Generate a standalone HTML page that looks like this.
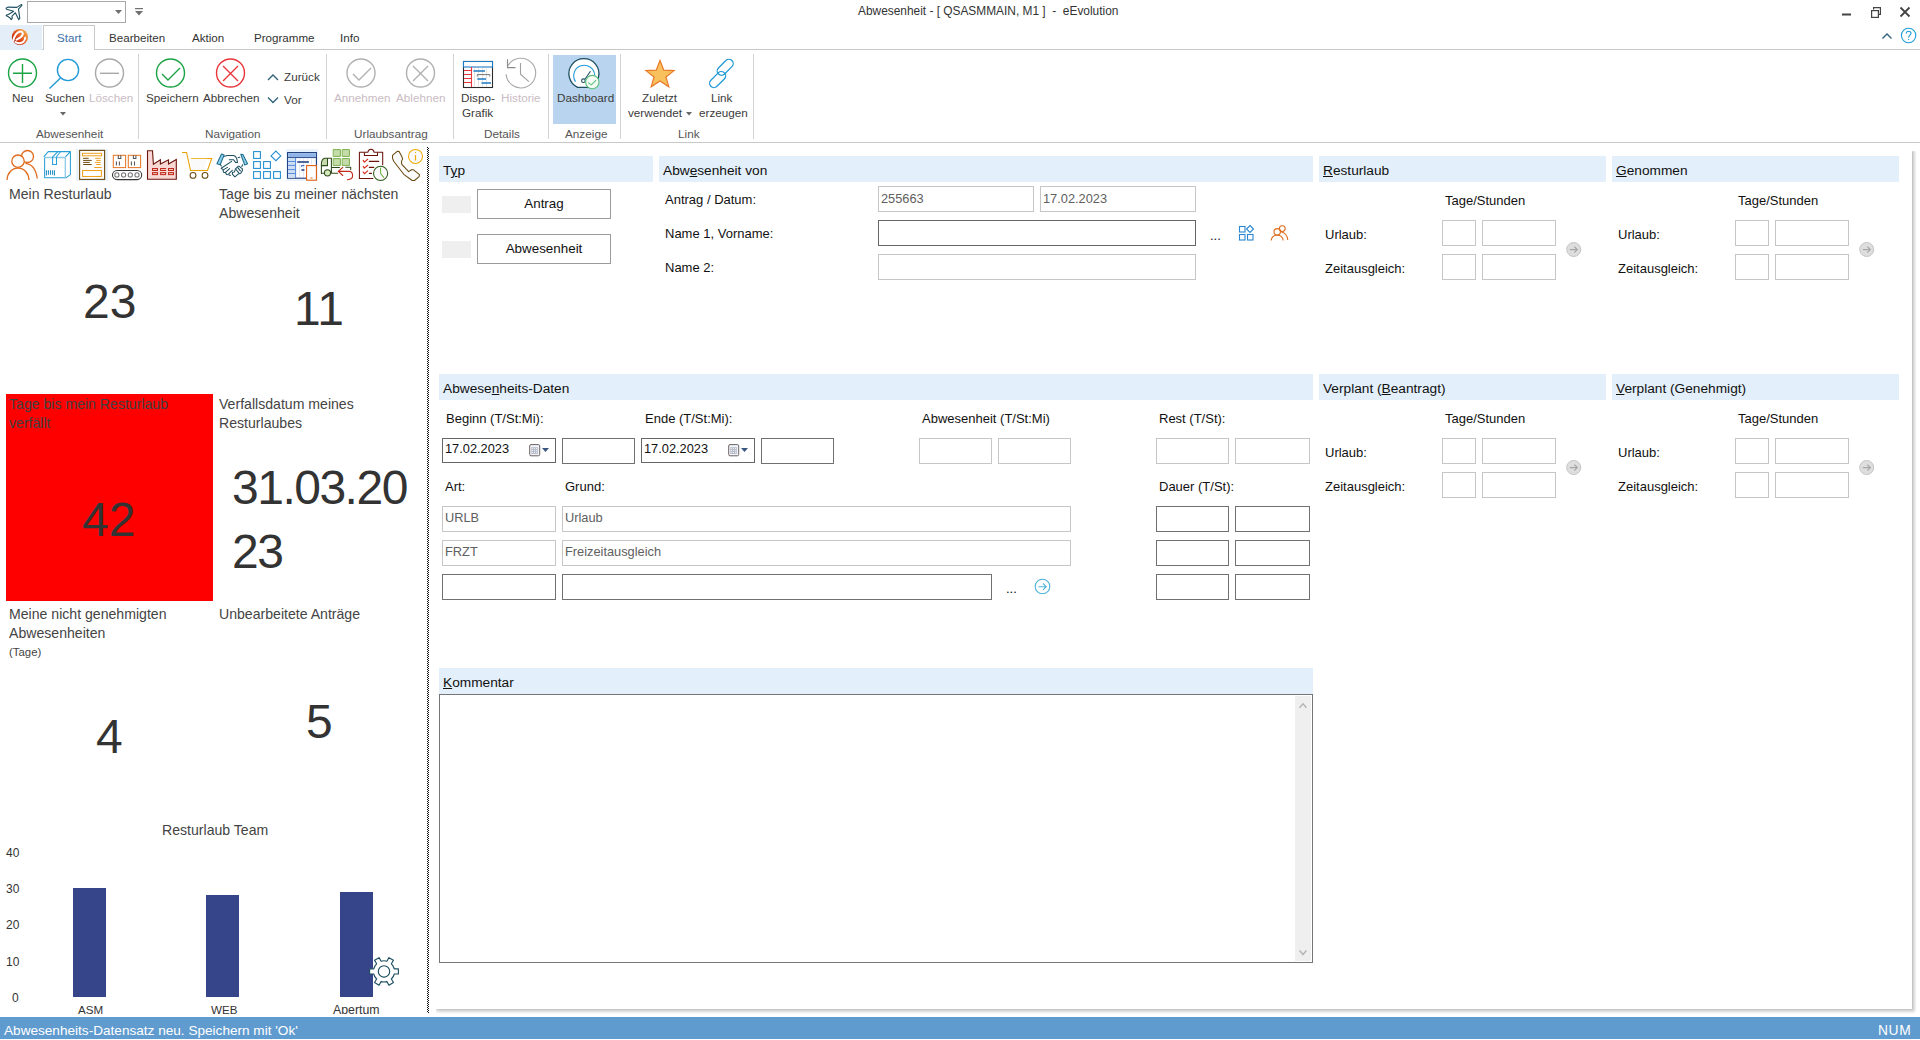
<!DOCTYPE html>
<html><head><meta charset="utf-8">
<style>
*{margin:0;padding:0;box-sizing:border-box}
html,body{width:1920px;height:1040px;overflow:hidden;background:#fff;font-family:"Liberation Sans",sans-serif;color:#000}
.a{position:absolute;white-space:nowrap}
.t{position:absolute;white-space:nowrap;line-height:1}
.box{position:absolute;border:1px solid #c6c6c6;background:#fff}
.dbox{position:absolute;border:1px solid #707070;background:#fff}
.hdr{position:absolute;background:#e3effa;height:26px}
.hdr span{position:absolute;left:4px;top:8px;font-size:13.7px;color:#111;line-height:1}
.lbl{position:absolute;font-size:13px;color:#111;line-height:1;white-space:nowrap}
.rl{position:absolute;font-size:11.7px;color:#3b3b3b;line-height:1;white-space:nowrap}
.gl{position:absolute;font-size:11.75px;color:#555;line-height:1;white-space:nowrap}
.sep{position:absolute;top:54px;width:1px;height:85px;background:#d3d3d3}
.tile{position:absolute;font-size:14.1px;color:#444;line-height:19px;white-space:nowrap}
.big{position:absolute;font-size:48px;color:#333;line-height:1;white-space:nowrap}
</style></head>
<body>
<!-- TITLE BAR -->
<svg class="a" style="left:0;top:0" width="26" height="24"><path d="M20.6 4.9Q21.7 4.1 21.9 5Q21.9 5.6 21.2 6.2L18.5 9.2L19.8 18.4L18.7 19.6L15.3 12.7L11.9 16.3L12.3 18.2L11.2 19.6L9.7 17.6Q9 17.4 8.5 16.8L6.3 15.7L6.3 15L8.5 14.5L13.6 11.2L6.6 9.3Q5.8 8.6 6.4 8L7.8 7.1L16.9 7.4Z" fill="none" stroke="#1d4f60" stroke-width="1.1" stroke-linejoin="round"/></svg>
<div class="a" style="left:27px;top:1px;width:99px;height:22px;border:1px solid #a8a8a8;background:#fff"></div>
<svg class="a" style="left:115px;top:10px" width="7" height="4"><path d="M0 0H7L3.5 4Z" fill="#707070"/></svg>
<svg class="a" style="left:134px;top:8px" width="10" height="9"><rect x="1" y="0" width="8" height="1.2" fill="#707070"/><path d="M1 3H9L5 7.5Z" fill="#707070"/></svg>
<div class="t" style="left:858px;top:6px;font-size:11.9px;color:#333">Abwesenheit - [ QSASMMAIN, M1 ]&nbsp; - &nbsp;eEvolution</div>
<svg class="a" style="left:1840px;top:4px" width="76" height="16">
 <rect x="2" y="9.5" width="9" height="2" fill="#444"/>
 <path d="M33.6 5.5V3.6H40.4V10.4H38.5" fill="none" stroke="#444" stroke-width="1.2"/>
 <rect x="31.6" y="6.6" width="6.8" height="6.8" fill="none" stroke="#444" stroke-width="1.2"/>
 <path d="M60.5 3.5L69.5 12.5M69.5 3.5L60.5 12.5" stroke="#444" stroke-width="1.8"/>
</svg>
<!-- TABS -->
<div class="a" style="left:0;top:49px;width:1920px;height:1px;background:#c8c8c8"></div>
<div class="a" style="left:0;top:25px;width:42px;height:25px;background:#e3eef9"></div>
<svg class="a" style="left:11px;top:28px" width="18" height="18" viewBox="0 0 18 18">
 <defs><linearGradient id="lg" x1="0.1" y1="0.9" x2="0.9" y2="0.2"><stop offset="0" stop-color="#b01a0a"/><stop offset="0.45" stop-color="#e04a1a"/><stop offset="1" stop-color="#f4a848"/></linearGradient></defs>
 <circle cx="8.9" cy="9" r="8.1" fill="url(#lg)"/>
 <path d="M2.2 12.8C3.2 8.5 5 4.4 8.8 3.7C10.9 3.3 12.4 4.4 11.7 6.4C11 8.3 8.4 10.4 5.6 11.6" fill="none" stroke="#fff" stroke-width="2" stroke-linecap="round"/>
 <path d="M4.4 14C5.6 15 7 15.2 8.6 15.2C11.3 15.1 14 13 14.2 9.8" fill="none" stroke="#fff" stroke-width="2" stroke-linecap="round"/>
</svg>
<div class="a" style="left:43px;top:25px;width:52px;height:25px;border:1px solid #c8c8c8;border-bottom:none;background:#fff"></div>
<div class="t" style="left:57px;top:32px;font-size:11.6px;color:#3c6fa6">Start</div>
<div class="t" style="left:109px;top:32px;font-size:11.6px;color:#333">Bearbeiten</div>
<div class="t" style="left:192px;top:32px;font-size:11.6px;color:#333">Aktion</div>
<div class="t" style="left:254px;top:32px;font-size:11.6px;color:#333">Programme</div>
<div class="t" style="left:340px;top:32px;font-size:11.6px;color:#333">Info</div>
<svg class="a" style="left:1880px;top:26px" width="40" height="20">
 <path d="M2.5 12.5L7 8L11.5 12.5" fill="none" stroke="#2d5f78" stroke-width="1.3"/>
 <circle cx="28.6" cy="9.5" r="7.2" fill="none" stroke="#1e9fd7" stroke-width="1.1"/>
 <path d="M26.2 7.6C26.2 6 27.3 5.2 28.6 5.2C30 5.2 31 6.1 31 7.4C31 9 28.7 9.3 28.7 11.2V11.8" fill="none" stroke="#1e9fd7" stroke-width="1.1"/>
 <circle cx="28.7" cy="13.6" r="0.7" fill="#1e9fd7"/>
</svg>
<!-- RIBBON -->
<div class="a" style="left:0;top:142px;width:1920px;height:1px;background:#c8c8c8"></div>
<div class="sep" style="left:138px"></div>
<div class="sep" style="left:326px"></div>
<div class="sep" style="left:453px"></div>
<div class="sep" style="left:548px"></div>
<div class="sep" style="left:620px"></div>
<div class="sep" style="left:753px"></div>
<div class="a" style="left:553px;top:55px;width:63px;height:69px;background:#b9d4ee"></div>
<svg class="a" style="left:0;top:50px" width="760" height="60">
 <!-- Neu -->
 <circle cx="22.5" cy="23" r="14" fill="none" stroke="#1ba345" stroke-width="1.4"/>
 <path d="M22.5 14V33M13 23.3H32" stroke="#1ba345" stroke-width="1.4"/>
 <!-- Suchen -->
 <circle cx="68" cy="20" r="10.6" fill="none" stroke="#229ad6" stroke-width="1.4"/>
 <path d="M60.5 28L49.5 38.5" stroke="#229ad6" stroke-width="1.4"/>
 <!-- Loeschen -->
 <circle cx="109.5" cy="23" r="14" fill="none" stroke="#a8a8a8" stroke-width="1.4"/>
 <path d="M100 23.3H119" stroke="#a8a8a8" stroke-width="1.4"/>
 <!-- Speichern -->
 <circle cx="170.5" cy="23" r="14" fill="none" stroke="#1ba345" stroke-width="1.4"/>
 <path d="M162 24L168 30L180 18" fill="none" stroke="#1ba345" stroke-width="1.4"/>
 <!-- Abbrechen -->
 <circle cx="230.5" cy="23" r="14" fill="none" stroke="#e8363a" stroke-width="1.4"/>
 <path d="M223 16L238 31M238 16L223 31" stroke="#e8363a" stroke-width="1.4"/>
 <!-- Zurueck / Vor chevrons -->
 <path d="M268 30L273 25L278 30" fill="none" stroke="#2d5f78" stroke-width="1.3"/>
 <path d="M268 47.5L273 52.5L278 47.5" fill="none" stroke="#2d5f78" stroke-width="1.3"/>
 <!-- Annehmen -->
 <circle cx="361" cy="23" r="14" fill="none" stroke="#b0b0b0" stroke-width="1.4"/>
 <path d="M353 24L359 30L371 18" fill="none" stroke="#b0b0b0" stroke-width="1.4"/>
 <!-- Ablehnen -->
 <circle cx="420.5" cy="23" r="14" fill="none" stroke="#b0b0b0" stroke-width="1.4"/>
 <path d="M413 16L428 31M428 16L413 31" stroke="#b0b0b0" stroke-width="1.4"/>
 <!-- Dispo-Grafik -->
 <rect x="463.5" y="11.5" width="29" height="26" fill="#fff" stroke="#2b2b2b" stroke-width="1.1"/>
 <rect x="463.5" y="11.5" width="29" height="5.5" fill="#fff" stroke="#1f7ac4" stroke-width="1.1"/>
 <path d="M474.5 18V37M478.5 18V37M482.5 18V37M486.5 18V37" stroke="#dcdcdc" stroke-width="0.8"/>
 <path d="M471.5 17V37M464 20.5H471M464 24.5H471M464 28.5H471M464 32.5H471" stroke="#e8363a" stroke-width="1.1"/>
 <path d="M473.5 21H485M477.3 29H486M481.5 33H491" stroke="#1f7ac4" stroke-width="1.7"/>
 <path d="M477.3 26.5V24.6H489.8V26.5" stroke="#666" stroke-width="0.9" fill="none"/>
 <!-- Historie -->
 <path d="M506.1 24.2A14.8 14.8 0 1 0 508 15.7" fill="none" stroke="#a8a8a8" stroke-width="1.1"/>
 <path d="M507.5 9.2V17.6H515.5" fill="none" stroke="#8a8a8a" stroke-width="1.1"/>
 <path d="M520.5 13.1V24.2L528.9 31.7" fill="none" stroke="#a0a0a0" stroke-width="1.1"/>
 <!-- Dashboard -->
 <path d="M577.6 37.3A15 15 0 1 1 590.2 37.3Z" fill="#fff" stroke="#1d4f60" stroke-width="1.3"/>
 <path d="M575.5 31.6A10.5 10.5 0 1 1 594.7 25.1" fill="none" stroke="#229ad6" stroke-width="1.1"/>
 <circle cx="583.4" cy="30.7" r="1.8" fill="none" stroke="#1d4f60" stroke-width="1.1"/>
 <path d="M585.1 29L590.5 21.3" stroke="#1d4f60" stroke-width="1.1"/>
 <circle cx="592.3" cy="32.1" r="6.7" fill="#f6fcf6" stroke="#5cc07a" stroke-width="1.1"/>
 <path d="M588.1 32.6L591.4 34.9L596.1 30.2" fill="none" stroke="#5cc07a" stroke-width="1.1"/>
 <!-- Zuletzt (star) -->
 <path d="M660 10.5L663.8 20.2L674 20.6L666 27L668.8 36.8L660 31L651.2 36.8L654 27L646 20.6L656.2 20.2Z" fill="#f8c15e" stroke="#e8792a" stroke-width="1.2" stroke-linejoin="miter"/>
 <!-- Link -->
 <g fill="none" stroke="#229ad6" stroke-width="1.3">
  <rect x="715.7" y="13" width="19" height="8.6" rx="4.3" transform="rotate(-45 725.2 17.3)"/>
  <rect x="708.1" y="25.3" width="19" height="8.6" rx="4.3" transform="rotate(-45 717.6 29.6)"/>
 </g>
</svg>
<div class="rl" style="left:12px;top:92px">Neu</div>
<div class="rl" style="left:45px;top:92px">Suchen</div>
<svg class="a" style="left:60px;top:112px" width="6" height="4"><path d="M0 0H6L3 3.5Z" fill="#666"/></svg>
<div class="rl" style="left:89px;top:92px;color:#c9bcc4">Löschen</div>
<div class="rl" style="left:146px;top:92px">Speichern</div>
<div class="rl" style="left:203px;top:92px">Abbrechen</div>
<div class="rl" style="left:284px;top:71px">Zurück</div>
<div class="rl" style="left:284px;top:94px">Vor</div>
<div class="rl" style="left:334px;top:92px;color:#c9bcc4">Annehmen</div>
<div class="rl" style="left:396px;top:92px;color:#c9bcc4">Ablehnen</div>
<div class="rl" style="left:461px;top:92px">Dispo-</div>
<div class="rl" style="left:462px;top:107px">Grafik</div>
<div class="rl" style="left:501px;top:92px;color:#c9bcc4">Historie</div>
<div class="rl" style="left:557px;top:92px">Dashboard</div>
<div class="rl" style="left:642px;top:92px">Zuletzt</div>
<div class="rl" style="left:628px;top:107px">verwendet</div>
<svg class="a" style="left:686px;top:112px" width="6" height="4"><path d="M0 0H6L3 3.5Z" fill="#666"/></svg>
<div class="rl" style="left:711px;top:92px">Link</div>
<div class="rl" style="left:699px;top:107px">erzeugen</div>
<div class="gl" style="left:36px;top:128px">Abwesenheit</div>
<div class="gl" style="left:205px;top:128px">Navigation</div>
<div class="gl" style="left:354px;top:128px">Urlaubsantrag</div>
<div class="gl" style="left:484px;top:128px">Details</div>
<div class="gl" style="left:565px;top:128px">Anzeige</div>
<div class="gl" style="left:678px;top:128px">Link</div>
<!-- LEFT PANEL -->
<div class="a" style="left:76px;top:149px;width:32px;height:32px;background:#eaf3fb"></div>
<div class="a" style="left:286px;top:149px;width:32px;height:32px;background:#eaf3fb"></div>
<svg class="a" style="left:0;top:145px" width="430" height="40">
 <!-- people -->
 <g fill="none" stroke="#e06c1e" stroke-width="1.3">
  <circle cx="27.5" cy="11.5" r="6"/>
  <path d="M25.5 18.3C31.5 19 36 24 37.3 33.5"/>
  <circle cx="18" cy="16.2" r="6.2" fill="#fff"/>
  <path d="M7 35C7.3 28 12 23.2 18 23.2C24 23.2 28.7 28 29 35" fill="#fff"/>
 </g>
 <!-- box -->
 <g fill="none" stroke-linejoin="round" stroke-width="1.05">
  <path d="M44.6 12.6V32.8H65.2" stroke="#2a9fd6"/>
  <path d="M44.2 12.5H65.3V32.8" stroke="#8fcbe8" stroke-width="1.3"/>
  <path d="M43.8 11.8L48.2 6.6H70.4V29.6L65.5 33.2M70.4 6.6L65.5 11.8" stroke="#2a9fd6"/>
  <path d="M52.6 11.8L57.6 6.8M56.5 11.8L60.4 6.8M52.6 11.8V19.4H56.5V11.8" stroke="#2a9fd6"/>
  <path d="M46.4 25.2V30.5M48.4 25.2V29.8M50.5 25.2V29.8M52.6 25.2V29.8M54.4 25.2V30.5" stroke="#1f8cc4"/>
 </g>
 <!-- document -->
 <rect x="79.6" y="5.4" width="25" height="29" fill="#fff" stroke="#6b4a10" stroke-width="1.1"/>
 <rect x="82.4" y="8.3" width="19.2" height="2.5" fill="none" stroke="#f0a020" stroke-width="1"/>
 <rect x="82.6" y="25.5" width="18.8" height="6" fill="none" stroke="#f0a020" stroke-width="1.05"/>
 <path d="M83.1 13.3H88.7M83.1 15.4H91.7M83.1 17.4H89.7M83.1 19.5H91.7" stroke="#6b4a10" stroke-width="1"/>
 <path d="M95.1 13.3H100.7M96.2 15.4H100.7M95.1 17.4H100.7M96.2 19.5H100.7M94.2 22.5H101.7" stroke="#f0a020" stroke-width="1"/>
 <!-- conveyor -->
 <g fill="none" stroke-width="1.05">
  <rect x="113.3" y="10.3" width="12.3" height="12.3" stroke="#e8792a"/>
  <rect x="128.3" y="10.3" width="12.3" height="12.3" stroke="#e8792a"/>
  <path d="M118.3 10.3V13.4H120.8V10.3M133.4 10.3V13.4H135.9V10.3M116.4 16.4V20.6M119.4 16.4V20.6M131.4 16.4V20.6M134.5 16.4V20.6" stroke="#555"/>
  <rect x="112.5" y="25.4" width="29.2" height="9.2" rx="4.6" stroke="#333"/>
  <circle cx="116.9" cy="29.9" r="2.1" stroke="#777"/><circle cx="123.6" cy="29.9" r="2.1" stroke="#777"/><circle cx="130.3" cy="29.9" r="2.1" stroke="#777"/><circle cx="137" cy="29.9" r="2.1" stroke="#777"/>
 </g>
 <!-- factory -->
 <path d="M147.5 34.3V5.8H152.5L153.4 19.2L160.4 14.8V19L168.5 14.8V19L176.3 14.5V34.3Z" fill="#f8d8d4" stroke="#6a140c" stroke-width="1.1" stroke-linejoin="miter"/>
 <g fill="#f4c0b8" stroke="#c0281c" stroke-width="1">
  <rect x="152.5" y="23.5" width="5" height="2"/><rect x="160.6" y="23.5" width="5" height="2"/><rect x="168.5" y="23.5" width="5" height="2"/>
  <rect x="152.5" y="27.6" width="5" height="2"/><rect x="160.6" y="27.6" width="5" height="2"/><rect x="168.5" y="27.6" width="5" height="2"/>
 </g>
 <!-- cart -->
 <path d="M182.1 7.5H186.6L190.5 25.4H207.5L211.7 13.4H191.1" fill="none" stroke="#e8a000" stroke-width="1.05" stroke-linejoin="miter"/>
 <path d="M191 13.8L207.2 13.8L203.9 25H191.2Z" fill="#fafafa"/>
 <circle cx="193" cy="30.4" r="2.9" fill="none" stroke="#6b4a10" stroke-width="1.05"/>
 <circle cx="205" cy="30.4" r="2.9" fill="none" stroke="#6b4a10" stroke-width="1.05"/>
 <!-- handshake -->
 <g stroke="#1d4f60" stroke-width="1.05" stroke-linejoin="round" stroke-linecap="round" fill="none">
  <path d="M221.5 9L224.1 10L220.2 19.7L216.9 18.7Z" fill="#8fd0ec" stroke="#1f6f90"/>
  <path d="M240.8 9.2L242.9 9.4L247.6 18.7L244.7 20Z" fill="#8fd0ec" stroke="#1f6f90"/>
  <path d="M224.4 11.2L227.4 10.5H233.6L235.5 11.5L236.8 13.8L237.5 17.4H235.5L233.6 14.8H229.3"/>
  <path d="M238.1 12.5L239.8 12.2"/>
  <path d="M231.6 16.4L221.2 23.3L223.1 24.6L223.4 27.2L225.7 27.8L226.4 29.5L229 29.8L230.3 30.5"/>
  <path d="M220.2 19.7L221.5 21M227.4 22.4L223.4 24.9M229.6 23.6L225.7 27.2M232.3 25.4L228.7 28.8"/>
  <path d="M238.1 21.3H239.2L242.4 23.9V25.5L240.8 28.2L238.1 29.1L234.9 31.8L232.3 29.1L232.6 27.2L234.5 26.9L235.5 23.9Z"/>
  <path d="M237.8 22.6L240.4 25.9M236 24.5L238.8 27.8M242.7 19.7L241.8 21.5"/>
 </g>
 <!-- blocks -->
 <g fill="none" stroke="#1f8cd0" stroke-width="1.05">
  <rect x="253.6" y="6.6" width="6.8" height="6.8"/>
  <path d="M275.9 6.1L280.8 10.9L275.9 15.7L271 10.9Z"/>
  <rect x="253.6" y="16.6" width="6.8" height="6.8"/><rect x="263.6" y="16.6" width="6.8" height="6.8"/>
  <rect x="253.6" y="26.6" width="6.8" height="6.8"/><rect x="263.6" y="26.6" width="6.8" height="6.8"/><rect x="273.6" y="26.6" width="6.8" height="6.8"/>
 </g>
 <!-- table+phone -->
 <rect x="287.6" y="7.6" width="28.8" height="25.6" fill="#fff" stroke="#1a3a7a" stroke-width="1.1"/>
 <rect x="288.2" y="8.2" width="27.6" height="4.2" fill="#90b4e8"/>
 <path d="M288 12.6H316" stroke="#1a3a7a" stroke-width="0.9"/>
 <rect x="288.2" y="13" width="7" height="19.8" fill="#d0def4"/>
 <path d="M288 16.5H295.4M288 20.4H295.4M288 24.6H295.4M288 28.5H295.4" stroke="#3a78d8" stroke-width="0.8"/>
 <path d="M295.6 12.8V33" stroke="#3a78d8" stroke-width="0.9"/>
 <path d="M299.5 14V32M303.4 14V32M307.6 14V19M311.5 14V19" stroke="#d3ddf2" stroke-width="0.7"/>
 <path d="M297.2 17.1H308.9M301.4 24.9H304.4" stroke="#1a3a7a" stroke-width="1.5"/>
 <path d="M301.4 21.8V20.6H304.4" fill="none" stroke="#2a5ab8" stroke-width="1"/>
 <rect x="306.6" y="20.6" width="9.8" height="14.6" fill="#fff" stroke="#e06010" stroke-width="1.1"/>
 <path d="M310.4 33H312.6" stroke="#e06010" stroke-width="0.9"/>
 <!-- truck -->
 <g stroke-linejoin="round" stroke-linecap="round">
  <rect x="333.6" y="4.6" width="6.8" height="6.8" fill="#c5dbaa" stroke="#7ab04a" stroke-width="1"/>
  <rect x="342.6" y="4.6" width="6.8" height="6.8" fill="#c5dbaa" stroke="#7ab04a" stroke-width="1"/>
  <rect x="333.6" y="13.6" width="6.8" height="6.8" fill="#c5dbaa" stroke="#7ab04a" stroke-width="1"/>
  <rect x="342.6" y="13.6" width="6.8" height="6.8" fill="#c5dbaa" stroke="#7ab04a" stroke-width="1"/>
  <path d="M322.2 20.6V15.5C322.5 14.5 323.5 13.5 324.5 13.5H327.5V20.6Z" fill="#c5dbaa"/>
  <path d="M321.4 28.6V19.3C321.4 16.5 322.5 13.8 324.5 13.2H331.4V28.2M321.6 20.6H327.5V13.5M331.7 22.4H339.6M331.7 28.3H337.6M321.4 28.2H324" fill="none" stroke="#2d4a1a" stroke-width="1.05"/>
  <circle cx="327.5" cy="27.8" r="3.1" fill="#d5e8bc" stroke="#2d4a1a" stroke-width="1.05"/>
  <path d="M345.8 22.3H350.7V24.6" fill="none" stroke="#2d4a1a" stroke-width="1.05"/>
  <path d="M342.8 22.3L338.3 26.4L342.8 30.5M338.3 26.4H349.4C351.5 26.6 352.6 28.5 352.6 30.8C352.6 33 351 34.6 347.4 34.7" fill="none" stroke="#c0281c" stroke-width="1.1"/>
 </g>
 <!-- clipboard -->
 <g fill="none" stroke-width="1.05" stroke-linejoin="round" stroke-linecap="round">
  <path d="M372.9 33.5H359.4V7.3H367.9C368.1 5.5 369.4 4.2 371 4.2C372.6 4.2 373.9 5.5 374 7.3H382.7V19.7" stroke="#6a140c"/>
  <path d="M364.4 7.7V10.4H377.5V7.7" stroke="#6a140c"/>
  <path d="M363.2 15.4L364.4 17.1L367.7 14.3M363.2 21.4L364.4 23.1L367.7 20.3M363.2 27L364.4 28.7L367.7 25.9" stroke="#d63020" stroke-width="1.2"/>
  <path d="M369.4 16.4H378.7M369.4 22.4H373.7M369.4 28.3H371.5" stroke="#6a140c" stroke-width="1.2"/>
  <circle cx="380.6" cy="28.3" r="7.1" fill="#fbfbfb" stroke="#2d5a1a"/>
  <path d="M380.6 23.1V28.5L383.7 32.4" stroke="#6ab040"/>
 </g>
 <!-- phone -->
 <path d="M392.5 10.4L397.5 6.2L399.1 6.6L401.8 11.6L402.6 13.9L401.4 16.6L401.8 19.3L408.7 26.6L411.4 24.7H413.3L419.5 29.7L419.1 31.6L414.5 35.5H412.2L403.7 29.3L393.7 16.2L392.5 13.1Z" fill="#fafafa" stroke="#6b4a10" stroke-width="1.05" stroke-linejoin="round"/>
 <circle cx="415.5" cy="11.4" r="7" fill="#fafafa" stroke="#f0a800" stroke-width="1.05"/>
 <path d="M415.5 10V15.6" stroke="#f0a800" stroke-width="1.2"/>
 <circle cx="415.5" cy="7.6" r="0.7" fill="#f0a800"/>
</svg>
<div class="a" style="left:427px;top:147px;width:1px;height:866px;background-image:repeating-linear-gradient(180deg,#111 0 1px,transparent 1px 2px);"></div>
<div class="a" style="left:428px;top:148px;width:1px;height:865px;background-image:repeating-linear-gradient(180deg,#111 0 1px,transparent 1px 2px);"></div>
<div class="tile" style="left:9px;top:185px">Mein Resturlaub</div>
<div class="tile" style="left:219px;top:185px">Tage bis zu meiner nächsten<br>Abwesenheit</div>
<div class="big" style="left:83px;top:278px">23</div>
<div class="big" style="left:294px;top:285px">11</div>
<div class="a" style="left:6px;top:394px;width:207px;height:207px;background:#ff0000"></div>
<div class="tile" style="left:9px;top:395px;color:#404040">Tage bis mein Resturlaub<br>verfällt</div>
<div class="big" style="left:82px;top:496px">42</div>
<div class="tile" style="left:219px;top:395px">Verfallsdatum meines<br>Resturlaubes</div>
<div class="big" style="left:232px;top:456px;line-height:64px;letter-spacing:-1.5px">31.03.20<br>23</div>
<div class="tile" style="left:9px;top:605px">Meine nicht genehmigten<br>Abwesenheiten</div>
<div class="tile" style="left:9px;top:643px;font-size:11.4px">(Tage)</div>
<div class="tile" style="left:219px;top:605px">Unbearbeitete Anträge</div>
<div class="big" style="left:96px;top:713px">4</div>
<div class="big" style="left:306px;top:698px">5</div>
<!-- chart -->
<div class="a" style="left:0;top:815px;width:426px;height:199px;overflow:hidden">
 <div class="tile" style="left:162px;top:6px">Resturlaub Team</div>
 <div class="t" style="left:6px;top:32px;font-size:12px;color:#333">40</div>
 <div class="t" style="left:6px;top:68px;font-size:12px;color:#333">30</div>
 <div class="t" style="left:6px;top:104px;font-size:12px;color:#333">20</div>
 <div class="t" style="left:6px;top:141px;font-size:12px;color:#333">10</div>
 <div class="t" style="left:12px;top:177px;font-size:12px;color:#333">0</div>
 <div class="a" style="left:73px;top:73px;width:33px;height:109px;background:#36448a"></div>
 <div class="a" style="left:206px;top:80px;width:33px;height:102px;background:#36448a"></div>
 <div class="a" style="left:340px;top:77px;width:33px;height:105px;background:#36448a"></div>
 <div class="t" style="left:78px;top:189px;font-size:11.6px;color:#333">ASM</div>
 <div class="t" style="left:211px;top:189px;font-size:11.6px;color:#333">WEB</div>
 <div class="t" style="left:333px;top:189px;font-size:12.3px;color:#333">Apertum</div>
 <svg class="a" style="left:368px;top:141px" width="33" height="31" viewBox="0 0 33 31">
  <path d="M26.28 12.80L30.40 12.80L30.40 18.00L26.28 18.00A10.6 10.6 0 0 1 23.39 23.00L25.45 26.57L20.95 29.17L18.89 25.60A10.6 10.6 0 0 1 13.11 25.60L11.05 29.17L6.55 26.57L8.61 23.00A10.6 10.6 0 0 1 5.72 18.00L1.60 18.00L1.60 12.80L5.72 12.80A10.6 10.6 0 0 1 8.61 7.80L6.55 4.23L11.05 1.63L13.11 5.20A10.6 10.6 0 0 1 18.89 5.20L20.95 1.63L25.45 4.23L23.39 7.80A10.6 10.6 0 0 1 26.28 12.80Z" fill="#fff" stroke="#1d4f60" stroke-width="1.15" stroke-linejoin="round"/>
  <circle cx="16" cy="15.4" r="5.7" fill="none" stroke="#1d4f60" stroke-width="1.15"/>
 </svg>
</div>
<!-- FORM PANEL -->
<div class="a" style="left:1912px;top:151px;width:5px;height:858px;background:linear-gradient(90deg,#bcbcbc,#d6d6d6 30%,#f4f4f4 75%,#fff)"></div>
<div class="a" style="left:1912px;top:147px;width:5px;height:6px;background:linear-gradient(180deg,#fff,rgba(255,255,255,0))"></div>
<div class="a" style="left:436px;top:1009px;width:1476px;height:5px;background:linear-gradient(180deg,#bcbcbc,#d6d6d6 30%,#f4f4f4 75%,#fff)"></div>
<div class="a" style="left:430px;top:1008px;width:10px;height:7px;background:linear-gradient(90deg,#fff,rgba(255,255,255,0))"></div>
<div class="a" style="left:1912px;top:1009px;width:5px;height:5px;background:radial-gradient(circle at 0 0,#c8c8c8,#fff 5px)"></div>
<!-- Typ -->
<div class="hdr" style="left:439px;top:156px;width:214px"><span>T<u>y</u>p</span></div>
<div class="a" style="left:442px;top:196px;width:29px;height:17px;background:#efefef"></div>
<div class="a" style="left:442px;top:241px;width:29px;height:17px;background:#efefef"></div>
<div class="a" style="left:477px;top:189px;width:134px;height:30px;border:1px solid #9a9a9a;background:#fff;font-size:13.4px;color:#111;text-align:center;line-height:28px">Antrag</div>
<div class="a" style="left:477px;top:234px;width:134px;height:30px;border:1px solid #9a9a9a;background:#fff;font-size:13.4px;color:#111;text-align:center;line-height:28px">Abwesenheit</div>
<!-- Abwesenheit von -->
<div class="hdr" style="left:659px;top:156px;width:654px"><span>Abw<u>e</u>senheit von</span></div>
<div class="lbl" style="left:665px;top:193px">Antrag / Datum:</div>
<div class="lbl" style="left:665px;top:227px">Name 1, Vorname:</div>
<div class="lbl" style="left:665px;top:261px">Name 2:</div>
<div class="box" style="left:878px;top:186px;width:156px;height:26px"></div>
<div class="t" style="left:881px;top:193px;font-size:12.8px;color:#606060">255663</div>
<div class="box" style="left:1040px;top:186px;width:156px;height:26px"></div>
<div class="t" style="left:1043px;top:193px;font-size:12.8px;color:#606060">17.02.2023</div>
<div class="a" style="left:878px;top:220px;width:318px;height:26px;border:1px solid #666;background:#fff"></div>
<div class="box" style="left:878px;top:254px;width:318px;height:26px"></div>
<div class="t" style="left:1210px;top:229px;font-size:13px;color:#111">...</div>
<svg class="a" style="left:1238px;top:224px" width="52" height="18">
 <g fill="none" stroke="#2a87d0" stroke-width="1.1">
  <rect x="1.5" y="2.5" width="5.5" height="5.5"/><path d="M12 1.5L15.5 5L12 8.5L8.5 5Z"/>
  <rect x="1.5" y="10.5" width="5.5" height="5.5"/><rect x="9.5" y="10.5" width="5.5" height="5.5"/>
 </g>
 <g fill="none" stroke="#e06c1e" stroke-width="1.1">
  <circle cx="44.3" cy="4.6" r="2.9"/><path d="M42.6 7.6C46.5 8 49.5 11.5 49.8 16"/>
  <circle cx="39.2" cy="7.8" r="3.2"/><path d="M33.2 16.5C33.5 13 36 11.3 39.2 11.3C42.4 11.3 44.9 13 45.2 16.5"/>
 </g>
</svg>
<!-- Resturlaub / Genommen -->
<div class="hdr" style="left:1319px;top:156px;width:287px"><span><u>R</u>esturlaub</span></div>
<div class="hdr" style="left:1612px;top:156px;width:287px"><span><u>G</u>enommen</span></div>
<!-- Abwesenheits-Daten -->
<div class="hdr" style="left:439px;top:374px;width:874px"><span>Abwese<u>n</u>heits-Daten</span></div>
<div class="lbl" style="left:446px;top:412px">Beginn (T/St:Mi):</div>
<div class="lbl" style="left:645px;top:412px">Ende (T/St:Mi):</div>
<div class="lbl" style="left:922px;top:412px">Abwesenheit (T/St:Mi)</div>
<div class="lbl" style="left:1159px;top:412px">Rest (T/St):</div>
<div class="a" style="left:442px;top:438px;width:114px;height:25px;border:1px solid #666;background:#fff"></div>
<div class="t" style="left:445px;top:443px;font-size:12.8px;color:#111">17.02.2023</div>
<div class="dbox" style="left:562px;top:438px;width:73px;height:26px"></div>
<div class="a" style="left:641px;top:438px;width:114px;height:25px;border:1px solid #666;background:#fff"></div>
<div class="t" style="left:644px;top:443px;font-size:12.8px;color:#111">17.02.2023</div>
<div class="dbox" style="left:761px;top:438px;width:73px;height:26px"></div>
<svg class="a" style="left:528px;top:443px" width="24" height="14">
 <rect x="1.7" y="1.6" width="10" height="11.2" rx="1.3" fill="#f0f4fb" stroke="#6e6262" stroke-width="1"/>
 <rect x="3.3" y="4.2" width="6.5" height="6.8" fill="#b9bdc9"/>
 <g fill="#fff"><circle cx="4.5" cy="5.4" r="0.5"/><circle cx="6.5" cy="5.4" r="0.5"/><circle cx="8.5" cy="5.4" r="0.5"/><circle cx="4.5" cy="7.4" r="0.5"/><circle cx="6.5" cy="7.4" r="0.5"/><circle cx="8.5" cy="7.4" r="0.5"/><circle cx="4.5" cy="9.4" r="0.5"/><circle cx="6.5" cy="9.4" r="0.5"/><circle cx="8.5" cy="9.4" r="0.5"/></g>
 <path d="M14 4.9H21L17.5 8.9Z" fill="#3a5580"/>
</svg>
<svg class="a" style="left:727px;top:443px" width="24" height="14">
 <rect x="1.7" y="1.6" width="10" height="11.2" rx="1.3" fill="#f0f4fb" stroke="#6e6262" stroke-width="1"/>
 <rect x="3.3" y="4.2" width="6.5" height="6.8" fill="#b9bdc9"/>
 <g fill="#fff"><circle cx="4.5" cy="5.4" r="0.5"/><circle cx="6.5" cy="5.4" r="0.5"/><circle cx="8.5" cy="5.4" r="0.5"/><circle cx="4.5" cy="7.4" r="0.5"/><circle cx="6.5" cy="7.4" r="0.5"/><circle cx="8.5" cy="7.4" r="0.5"/><circle cx="4.5" cy="9.4" r="0.5"/><circle cx="6.5" cy="9.4" r="0.5"/><circle cx="8.5" cy="9.4" r="0.5"/></g>
 <path d="M14 4.9H21L17.5 8.9Z" fill="#3a5580"/>
</svg>
<div class="box" style="left:919px;top:438px;width:73px;height:26px"></div>
<div class="box" style="left:998px;top:438px;width:73px;height:26px"></div>
<div class="box" style="left:1156px;top:438px;width:73px;height:26px"></div>
<div class="box" style="left:1235px;top:438px;width:75px;height:26px"></div>
<div class="lbl" style="left:445px;top:480px">Art:</div>
<div class="lbl" style="left:565px;top:480px">Grund:</div>
<div class="lbl" style="left:1159px;top:480px">Dauer (T/St):</div>
<div class="box" style="left:442px;top:506px;width:114px;height:26px"></div>
<div class="t" style="left:445px;top:512px;font-size:12.8px;color:#606060">URLB</div>
<div class="box" style="left:562px;top:506px;width:509px;height:26px"></div>
<div class="t" style="left:565px;top:512px;font-size:12.8px;color:#606060">Urlaub</div>
<div class="box" style="left:442px;top:540px;width:114px;height:26px"></div>
<div class="t" style="left:445px;top:546px;font-size:12.8px;color:#606060">FRZT</div>
<div class="box" style="left:562px;top:540px;width:509px;height:26px"></div>
<div class="t" style="left:565px;top:546px;font-size:12.8px;color:#606060">Freizeitausgleich</div>
<div class="dbox" style="left:442px;top:574px;width:114px;height:26px"></div>
<div class="dbox" style="left:562px;top:574px;width:430px;height:26px"></div>
<div class="t" style="left:1006px;top:582px;font-size:13px;color:#111">...</div>
<svg class="a" style="left:1034px;top:578px" width="18" height="18">
 <circle cx="8.5" cy="8.5" r="7.3" fill="#fff" stroke="#4fb3d9" stroke-width="1.1"/>
 <path d="M4.5 8.7H12M9 5.5L12.2 8.7L9 11.9" fill="none" stroke="#4fb3d9" stroke-width="1.1"/>
</svg>
<div class="dbox" style="left:1156px;top:506px;width:73px;height:26px"></div>
<div class="dbox" style="left:1235px;top:506px;width:75px;height:26px"></div>
<div class="dbox" style="left:1156px;top:540px;width:73px;height:26px"></div>
<div class="dbox" style="left:1235px;top:540px;width:75px;height:26px"></div>
<div class="dbox" style="left:1156px;top:574px;width:73px;height:26px"></div>
<div class="dbox" style="left:1235px;top:574px;width:75px;height:26px"></div>
<div class="hdr" style="left:1319px;top:374px;width:287px"><span>Verplant (<u>B</u>eantragt)</span></div>
<div class="hdr" style="left:1612px;top:374px;width:287px"><span><u>V</u>erplant (Genehmigt)</span></div>
<!-- Kommentar -->
<div class="hdr" style="left:439px;top:668px;width:874px"><span><u>K</u>ommentar</span></div>
<div class="a" style="left:439px;top:694px;width:874px;height:269px;border:1px solid #767676;background:#fff"></div>
<div class="a" style="left:1295px;top:696px;width:16px;height:265px;background:#efefef"></div>
<svg class="a" style="left:1296px;top:700px" width="14" height="258">
 <path d="M3.5 7.8L7 3.8L10.5 7.8" fill="none" stroke="#b5b5b5" stroke-width="1.5"/>
 <path d="M3.6 250.6L7 254.6L10.4 250.6" fill="none" stroke="#b5b5b5" stroke-width="1.5"/>
</svg>
<!-- SIDE GROUPS -->
<div class="lbl" style="left:1445px;top:194px">Tage/Stunden</div>
<div class="lbl" style="left:1325px;top:228px">Urlaub:</div>
<div class="lbl" style="left:1325px;top:262px">Zeitausgleich:</div>
<div class="box" style="left:1442px;top:220px;width:34px;height:26px"></div>
<div class="box" style="left:1482px;top:220px;width:74px;height:26px"></div>
<div class="box" style="left:1442px;top:254px;width:34px;height:26px"></div>
<div class="box" style="left:1482px;top:254px;width:74px;height:26px"></div>
<svg class="a" style="left:1566px;top:242px" width="16" height="16"><circle cx="7.7" cy="7.5" r="7" fill="#dedede" stroke="#c4c4c4" stroke-width="1"/><path d="M3.8 7.6H11.3M8.3 4.6L11.3 7.6L8.3 10.6" fill="none" stroke="#a6a6a6" stroke-width="1.2"/></svg>
<div class="lbl" style="left:1738px;top:194px">Tage/Stunden</div>
<div class="lbl" style="left:1618px;top:228px">Urlaub:</div>
<div class="lbl" style="left:1618px;top:262px">Zeitausgleich:</div>
<div class="box" style="left:1735px;top:220px;width:34px;height:26px"></div>
<div class="box" style="left:1775px;top:220px;width:74px;height:26px"></div>
<div class="box" style="left:1735px;top:254px;width:34px;height:26px"></div>
<div class="box" style="left:1775px;top:254px;width:74px;height:26px"></div>
<svg class="a" style="left:1859px;top:242px" width="16" height="16"><circle cx="7.7" cy="7.5" r="7" fill="#dedede" stroke="#c4c4c4" stroke-width="1"/><path d="M3.8 7.6H11.3M8.3 4.6L11.3 7.6L8.3 10.6" fill="none" stroke="#a6a6a6" stroke-width="1.2"/></svg>
<div class="lbl" style="left:1445px;top:412px">Tage/Stunden</div>
<div class="lbl" style="left:1325px;top:446px">Urlaub:</div>
<div class="lbl" style="left:1325px;top:480px">Zeitausgleich:</div>
<div class="box" style="left:1442px;top:438px;width:34px;height:26px"></div>
<div class="box" style="left:1482px;top:438px;width:74px;height:26px"></div>
<div class="box" style="left:1442px;top:472px;width:34px;height:26px"></div>
<div class="box" style="left:1482px;top:472px;width:74px;height:26px"></div>
<svg class="a" style="left:1566px;top:460px" width="16" height="16"><circle cx="7.7" cy="7.5" r="7" fill="#dedede" stroke="#c4c4c4" stroke-width="1"/><path d="M3.8 7.6H11.3M8.3 4.6L11.3 7.6L8.3 10.6" fill="none" stroke="#a6a6a6" stroke-width="1.2"/></svg>
<div class="lbl" style="left:1738px;top:412px">Tage/Stunden</div>
<div class="lbl" style="left:1618px;top:446px">Urlaub:</div>
<div class="lbl" style="left:1618px;top:480px">Zeitausgleich:</div>
<div class="box" style="left:1735px;top:438px;width:34px;height:26px"></div>
<div class="box" style="left:1775px;top:438px;width:74px;height:26px"></div>
<div class="box" style="left:1735px;top:472px;width:34px;height:26px"></div>
<div class="box" style="left:1775px;top:472px;width:74px;height:26px"></div>
<svg class="a" style="left:1859px;top:460px" width="16" height="16"><circle cx="7.7" cy="7.5" r="7" fill="#dedede" stroke="#c4c4c4" stroke-width="1"/><path d="M3.8 7.6H11.3M8.3 4.6L11.3 7.6L8.3 10.6" fill="none" stroke="#a6a6a6" stroke-width="1.2"/></svg>
<!-- STATUS BAR -->
<div class="a" style="left:0;top:1017px;width:1920px;height:22px;background:#5f9bcf"></div>
<div class="t" style="left:4px;top:1024px;font-size:13.6px;color:#fff">Abwesenheits-Datensatz neu. Speichern mit 'Ok'</div>
<div class="t" style="left:1878px;top:1024px;font-size:13.8px;letter-spacing:0.6px;color:#fff">NUM</div>
</body></html>
